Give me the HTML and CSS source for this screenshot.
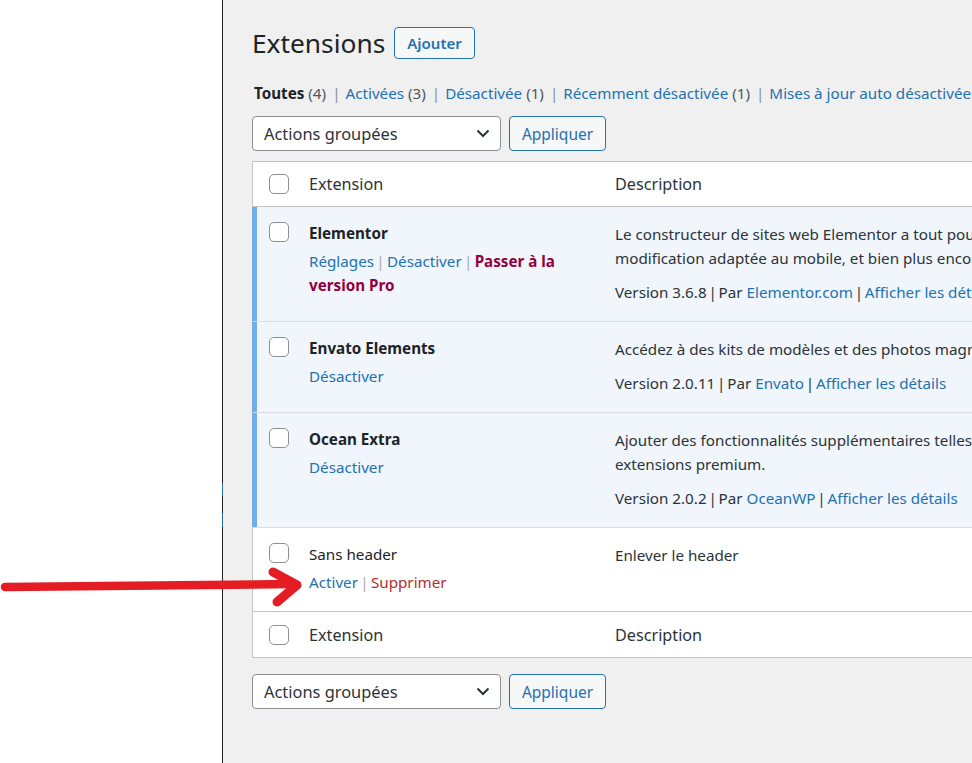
FILE: index.html
```html
<!DOCTYPE html>
<html lang="fr">
<head>
<meta charset="utf-8">
<title>Extensions</title>
<link rel="stylesheet" href="styles.css">
</head>
<body>
<div class="layout">
  <aside class="sidebar"><div class="rail"></div></aside>
  <main class="main">
    <div class="page-head">
      <h1 class="title">Extensions</h1>
      <a class="btn-add">Ajouter</a>
    </div>
    <ul class="subsub">
      <li><b class="current">Toutes</b> <span class="count">(4)</span><span class="sep">|</span></li>
      <li><a class="link">Activées</a> <span class="count">(3)</span><span class="sep">|</span></li>
      <li><a class="link">Désactivée</a> <span class="count">(1)</span><span class="sep">|</span></li>
      <li><a class="link">Récemment désactivée</a> <span class="count">(1)</span><span class="sep">|</span></li>
      <li><a class="link">Mises à jour auto désactivées</a> <span class="count">(4)</span></li>
    </ul>
    <div class="tablenav">
      <div class="select"><span>Actions groupées</span><svg class="chev" width="14" height="9" viewBox="0 0 14 9"><path d="M1.5 1.5 L7 7 L12.5 1.5" fill="none" stroke="#2c3338" stroke-width="2"/></svg></div>
      <a class="btn-apply">Appliquer</a>
    </div>

    <div class="table">
      <div class="row thead">
        <div class="cell check"><span class="cb"></span></div>
        <div class="cell plugin">Extension</div>
        <div class="cell desc">Description</div>
      </div>

      <div class="row active">
        <div class="cell check"><span class="cb"></span></div>
        <div class="cell plugin">
          <strong class="name">Elementor</strong>
          <div class="actions"><a class="link">Réglages</a><span class="asep">|</span><a class="link">Désactiver</a><span class="asep">|</span><a class="pro">Passer à la version Pro</a></div>
        </div>
        <div class="cell desc">
          <p class="text">Le constructeur de sites web Elementor a tout pour lui : constructeur de page par glisser-déposer, design au pixel près,<br>modification adaptée au mobile, et bien plus encore. Commencez dès maintenant !</p>
          <p class="meta">Version 3.6.8<span class="msep">|</span>Par <a class="link">Elementor.com</a><span class="msep">|</span><a class="link">Afficher les détails</a></p>
        </div>
      </div>

      <div class="row active">
        <div class="cell check"><span class="cb"></span></div>
        <div class="cell plugin">
          <strong class="name">Envato Elements</strong>
          <div class="actions"><a class="link">Désactiver</a></div>
        </div>
        <div class="cell desc">
          <p class="text">Accédez à des kits de modèles et des photos magnifiques. Plus de 100 kits et des milliers d’images libres de droits.</p>
          <p class="meta">Version 2.0.11<span class="msep">|</span>Par <a class="link">Envato</a><span class="msep">|</span><a class="link">Afficher les détails</a></p>
        </div>
      </div>

      <div class="row active">
        <div class="cell check"><span class="cb"></span></div>
        <div class="cell plugin">
          <strong class="name">Ocean Extra</strong>
          <div class="actions"><a class="link">Désactiver</a></div>
        </div>
        <div class="cell desc">
          <p class="text">Ajouter des fonctionnalités supplémentaires telles que des widgets, des métaboxes, l’import/export et un panneau pour activer les<br>extensions premium.</p>
          <p class="meta">Version 2.0.2<span class="msep">|</span>Par <a class="link">OceanWP</a><span class="msep">|</span><a class="link">Afficher les détails</a></p>
        </div>
      </div>

      <div class="row inactive">
        <div class="cell check"><span class="cb"></span></div>
        <div class="cell plugin">
          <span class="name plain">Sans header</span>
          <div class="actions"><a class="link">Activer</a><span class="asep">|</span><a class="delete">Supprimer</a></div>
        </div>
        <div class="cell desc">
          <p class="text">Enlever le header</p>
        </div>
      </div>

      <div class="row tfoot">
        <div class="cell check"><span class="cb"></span></div>
        <div class="cell plugin">Extension</div>
        <div class="cell desc">Description</div>
      </div>
    </div>

    <div class="tablenav bottom">
      <div class="select"><span>Actions groupées</span><svg class="chev" width="14" height="9" viewBox="0 0 14 9"><path d="M1.5 1.5 L7 7 L12.5 1.5" fill="none" stroke="#2c3338" stroke-width="2"/></svg></div>
      <a class="btn-apply">Appliquer</a>
    </div>
  </main>
</div>
<svg class="arrow" width="310" height="60" viewBox="0 0 310 60">
  <path d="M5 27 L292 24" fill="none" stroke="#e31d23" stroke-width="8.5" stroke-linecap="round"/>
  <path d="M273 12 L297 25 L277 42" fill="none" stroke="#e31d23" stroke-width="9" stroke-linecap="round" stroke-linejoin="round"/>
</svg>
</body>
</html>
```
FILE: styles.css
```css
* { box-sizing: border-box; }
html, body { margin: 0; padding: 0; }
body {
  position: relative;
  width: 972px;
  height: 763px;
  overflow: hidden;
  background: #fff;
  font-family: "Noto Sans", "Open Sans", sans-serif;
  font-size: 15.2px;
  line-height: 24px;
  color: #2c3338;
}
.layout { display: flex; height: 763px; }
.sidebar { width: 223px; flex: none; display: flex; justify-content: flex-end; background: #fff; }
.rail {
  width: 1px;
  background: linear-gradient(to bottom,
    #1d2327 0, #1d2327 483px,
    #2271b1 483px, #2271b1 496px,
    #1d2327 496px, #1d2327 513px,
    #2271b1 513px, #2271b1 527px,
    #1d2327 527px);
}
.main {
  flex: 1;
  min-width: 0;
  background: #f0f0f1;
  padding: 27px 0 0 29px;
  overflow: hidden;
}
.page-head { display: flex; align-items: center; gap: 9px; height: 32px; }
.title {
  margin: 0;
  font-size: 26.3px;
  font-weight: 400;
  line-height: 32px;
  color: #1d2327;
}
.btn-add {
  display: flex; align-items: center;
  height: 32px;
  padding: 0 12px;
  border: 1px solid #2271b1;
  border-radius: 4px;
  background: #f6f7f7;
  color: #2271b1;
  font-size: 15px;
  font-weight: 600;
}
.subsub {
  list-style: none;
  margin: 22px 0 0 2px;
  padding: 0;
  display: flex;
  white-space: nowrap;
  height: 24px;
}
.current { font-weight: 700; color: #1d2327; }
.count { color: #50575e; }
.sep { color: #8c8f94; padding: 0 5px 0 6px; }
.link { color: #2271b1; }
.tablenav { display: flex; gap: 8px; margin-top: 11px; height: 35px; }
.tablenav.bottom { margin-top: 16px; }
.select {
  width: 249px;
  height: 35px;
  display: flex;
  align-items: center;
  padding: 0 10px 0 11px;
  border: 1px solid #8c8f94;
  border-radius: 4px;
  background: #fff;
  color: #2c3338;
  font-size: 16.4px;
}
.chev { margin-left: auto; }
.btn-apply {
  display: flex; align-items: center; justify-content: center;
  width: 97px;
  height: 35px;
  border: 1px solid #2271b1;
  border-radius: 4px;
  background: #f6f7f7;
  color: #2271b1;
  font-size: 15.5px;
}
.table {
  margin-top: 10px;
  width: 1100px;
  border: 1px solid #c3c4c7;
  background: #fff;
}
.row { display: grid; grid-template-columns: 45px 306px 1fr; }
.thead, .tfoot { height: 45px; font-size: 16.2px; color: #2c3338; }
.thead { border-bottom: 1px solid #c3c4c7; }
.tfoot { height: 46px; border-top: 1px solid #c3c4c7; }
.thead .cell, .tfoot .cell { display: flex; align-items: center; }
.cell.check { padding-left: 16px; }
.cell.plugin { padding: 14px 11px 17px 11px; }
.cell.desc { padding: 15px 11px 17px 11px; white-space: nowrap; }
.thead .cell.plugin, .tfoot .cell.plugin { padding: 0 11px; }
.thead .cell.desc, .tfoot .cell.desc { padding: 0 11px; }
.thead .cell.check, .tfoot .cell.check { padding-top: 0; }
.row.active .cell.check, .row.inactive .cell.check { padding-top: 15px; }
.cb {
  display: block;
  width: 20px; height: 20px;
  border: 1px solid #8c8f94;
  border-radius: 5px;
  background: #fff;
}
.row.active { background: #f0f6fc; box-shadow: -1px 0 0 #72aee6, inset 4px 0 0 #72aee6; }
.row.active + .row { border-top: 1px solid #dcdcde; }
.name { display: block; font-weight: 700; color: #1d2327; }
.name.plain { font-weight: 400; }
.actions { margin-top: 4px; }
.asep { display: inline-block; width: 13px; text-align: center; color: #a7aaad; }
.msep { display: inline-block; width: 12px; text-align: center; color: #2c3338; }
.pro { color: #93003c; font-weight: 700; }
.delete { color: #b32d2e; }
.text { margin: 0; }
.meta { margin: 10px 0 0; color: #2c3338; }
.arrow { position: absolute; left: 0; top: 560px; }
```
